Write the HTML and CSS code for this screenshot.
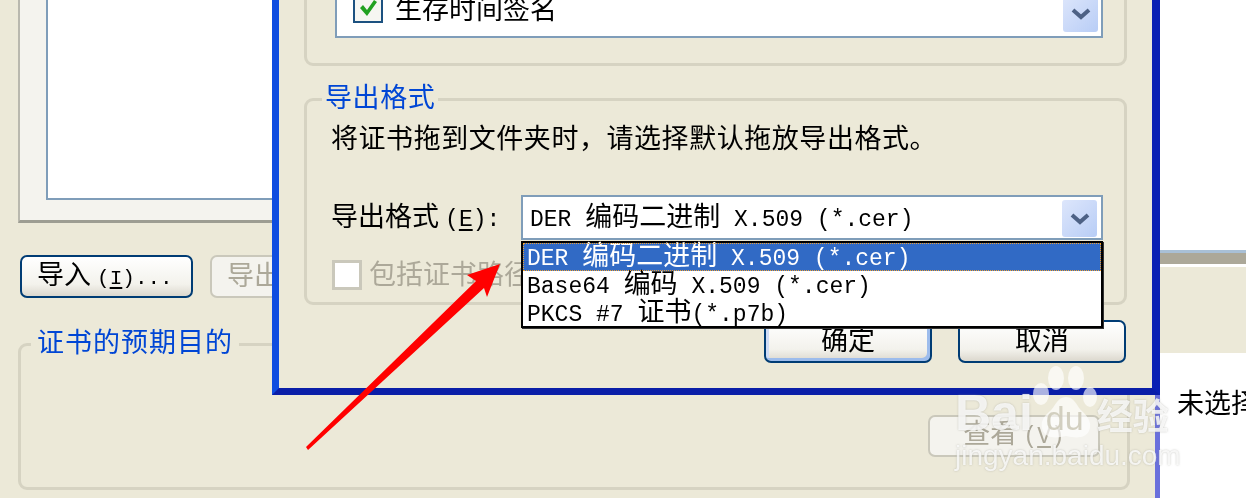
FILE: index.html
```html
<!DOCTYPE html>
<html lang="zh">
<head>
<meta charset="utf-8">
<title>证书导出格式</title>
<link rel="stylesheet" href="styles.css">
</head>
<body>
<div class="stage">
  <section class="back">
    <div class="tab-panel"><div class="cert-list"></div></div>
    <div class="back-buttons">
      <button class="btn btn-import"><span class="btn-label">导入 <span class="l l-small">(<u>I</u>)...</span></span></button>
      <button class="btn btn-export" disabled><span class="btn-label">导出</span></button>
    </div>
    <div class="group group-purpose">
      <div class="legend legend-purpose">证书的预期目的</div>
      <button class="btn btn-view" disabled><span class="btn-label">查看 <span class="l">(<u>V</u>)</span></span></button>
    </div>
  </section>

  <aside class="side">
    <div class="side-bar"></div>
    <div class="side-white"><span class="side-text">未选择</span></div>
  </aside>

  <section class="dialog">
    <div class="group group-top">
      <div class="list">
        <div class="list-row">
          <span class="check">
            <svg width="24" height="24" viewBox="0 0 24 24"><path d="M4 12l3-3 4 5 7-10 3 2-10 14z" fill="#21a121"/></svg>
          </span>
          <span>生存时间签名</span>
        </div>
        <span class="arrow-btn arrow-btn-list">
          <svg width="20" height="14" viewBox="0 0 20 14"><path d="M2 3l8 7 8-7" fill="none" stroke="#4d6185" stroke-width="4"/></svg>
        </span>
      </div>
    </div>
    <div class="group group-format">
      <div class="legend legend-format">导出格式</div>
      <p class="hint">将证书拖到文件夹时，请选择默认拖放导出格式。</p>
      <div class="format-row">
        <label class="format-label">导出格式 <span class="l">(<u>E</u>):</span></label>
        <div class="combo">
          <span class="combo-text"><span class="l">DER </span>编码二进制<span class="l"> X.509 (*.cer)</span></span>
          <span class="arrow-btn">
            <svg width="20" height="14" viewBox="0 0 20 14"><path d="M2 3l8 7 8-7" fill="none" stroke="#4d6185" stroke-width="4"/></svg>
          </span>
        </div>
      </div>
      <div class="path-row">
        <span class="check check-off"></span>
        <span class="path-text">包括证书路径</span>
      </div>
    </div>
    <div class="dialog-buttons">
      <button class="btn btn-ok"><span class="btn-label">确定</span></button>
      <button class="btn btn-cancel"><span class="btn-label">取消</span></button>
    </div>
  </section>

  <ul class="dropdown">
    <li class="opt opt-selected"><span class="l">DER </span>编码二进制<span class="l"> X.509 (*.cer)</span></li>
    <li class="opt"><span class="l">Base64 </span>编码<span class="l"> X.509 (*.cer)</span></li>
    <li class="opt"><span class="l">PKCS #7 </span>证书<span class="l">(*.p7b)</span></li>
  </ul>

  <svg class="red-arrow" width="1246" height="498" viewBox="0 0 1246 498">
    <polygon points="500,264 467,275 476,281 306,447 308,450 484,288 487,297" fill="#ff0000"/>
  </svg>

  <div class="watermark">
    <svg class="paw" width="66" height="84" viewBox="0 0 66 84">
      <ellipse cx="8" cy="29" rx="8" ry="11"/>
      <ellipse cx="23" cy="13" rx="8" ry="12"/>
      <ellipse cx="43" cy="13" rx="8" ry="12"/>
      <ellipse cx="57" cy="32" rx="7" ry="10"/>
      <path d="M33 32c-9 0-10 9-17 15-7 6-9 12-6 19 4 8 14 7 23 5 9 2 19 3 23-5 3-7 0-13-6-19-7-6-8-15-17-15z"/>
    </svg>
    <div class="wm-brand"><span class="wm-bai">Bai</span><span class="wm-du">du</span><span class="wm-cn">经验</span></div>
    <div class="wm-url">jingyan.baidu.com</div>
  </div>
</div>
</body>
</html>
```
FILE: styles.css
```css
* { box-sizing: border-box; }
html, body { margin: 0; padding: 0; }
body {
  width: 1246px;
  height: 498px;
  overflow: hidden;
  font-family: "Noto Sans CJK SC", "Liberation Sans", sans-serif;
  font-size: 27px;
  color: #000;
  background: #ece9d8;
}
.stage {
  position: relative;
  width: 1246px;
  height: 498px;
  overflow: hidden;
  background: #ece9d8;
  filter: blur(0.4px);
}
.l {
  font-family: "Liberation Mono", monospace;
  font-size: 23px;
}
.l-small { font-size: 21px; }
u { text-underline-offset: 3px; }

/* back window */
.back {
  position: absolute;
  left: 18px;
  top: -40px;
  width: 1137px;
  height: 538px;
  display: flex;
  flex-direction: column;
}
.tab-panel {
  width: 1137px;
  height: 263px;
  padding: 0 0 20px 26px;
  background: #f4f3ee;
  border-left: 2px solid #b9b8ae;
  border-bottom: 3px solid #9d9d92;
}
.cert-list {
  height: 100%;
  background: #fff;
  border-left: 2px solid #7f9db9;
  border-bottom: 2px solid #7f9db9;
}
.back-buttons {
  display: flex;
  gap: 17px;
  margin: 32px 0 0 2px;
}
.btn {
  font-family: inherit;
  font-size: 27px;
  line-height: 1;
  color: #000;
  padding: 0;
  border: 2px solid #003c74;
  border-radius: 7px;
  background: linear-gradient(#fff, #f3f2ec 70%, #dcd8ce);
}
.btn-label { display: block; margin-top: -6px; white-space: nowrap; }
.btn:disabled {
  color: #aca899;
  border-color: #cac8bb;
  background: #f4f3ee;
}
.btn-import { width: 173px; height: 43px; text-align: left; padding-left: 15px; }
.btn-export { width: 110px; height: 43px; text-align: left; padding-left: 15px; }
.group {
  position: relative;
  border: 3px solid #d6d3c2;
  border-radius: 9px;
}
.group-purpose {
  width: 1112px;
  height: 147px;
  margin-top: 45px;
}
.btn-view {
  position: absolute;
  left: 907px;
  top: 69px;
  width: 172px;
  height: 42px;
}
.legend {
  position: absolute;
  background: #ece9d8;
  color: #0046d5;
  line-height: 36px;
  white-space: nowrap;
}
.legend-purpose { left: 10px; top: -23px; padding: 0 6px; letter-spacing: 1px; }

/* right pane */
.side {
  position: absolute;
  left: 1155px;
  top: 0;
  width: 91px;
  height: 498px;
  background: #fff;
  border-left: 5px solid #6a70dc;
}
.side-bar {
  margin-top: 250px;
  height: 103px;
  background: #ece9d8;
  border-top: 3px solid #a9c0d6;
  box-shadow: inset 0 11px 0 #aca899, inset 0 14px 0 #fff;
}
.side-white {
  padding: 30px 0 0 17px;
  white-space: nowrap;
  line-height: 38px;
}

/* dialog */
.dialog {
  position: absolute;
  left: 272px;
  top: -40px;
  width: 888px;
  height: 435px;
  padding: 0 25px 0 25px;
  background: #ece9d8;
  border-left: 7px solid #0f4de0;
  border-right: 8px solid #0a20b4;
  border-bottom: 7px solid #0a1ea8;
  display: flex;
  flex-direction: column;
}
.group-top {
  height: 106px;
  padding: 0 21px 25px 28px;
}
.list {
  position: relative;
  height: 100%;
  background: #fff;
  border: 2px solid #7f9db9;
  border-top: 0;
}
.list-row {
  display: flex;
  align-items: center;
  gap: 12px;
  position: absolute;
  left: 16px;
  top: 26px;
  line-height: 38px;
}
.check {
  display: flex;
  align-items: center;
  justify-content: center;
  width: 30px;
  height: 30px;
  background: #f6f6f2;
  border: 2px solid #1c5180;
}
.arrow-btn {
  position: absolute;
  right: 4px;
  top: 3px;
  width: 35px;
  height: 37px;
  display: flex;
  align-items: center;
  justify-content: center;
  background: linear-gradient(135deg, #dde6fb, #b8cdf6);
  border-radius: 3px;
}
.arrow-btn-list { top: 32px; right: 3px; }
.group-format {
  height: 207px;
  margin-top: 32px;
}
.legend-format { left: 15px; top: -23px; padding: 0 3px; letter-spacing: 0.6px; }
.hint {
  margin: 0;
  position: absolute;
  left: 24px;
  top: 17px;
  line-height: 38px;
  letter-spacing: 0.55px;
  white-space: nowrap;
}
.format-row {
  position: absolute;
  left: 24px;
  top: 94px;
  display: flex;
  align-items: center;
  gap: 12px;
}
.format-label {
  width: 178px;
  white-space: nowrap;
  line-height: 34px;
}
.combo {
  position: relative;
  width: 582px;
  height: 45px;
  background: #fff;
  border: 2px solid #7f9db9;
  padding-left: 7px;
  line-height: 36px;
  white-space: nowrap;
}
.path-row {
  position: absolute;
  left: 25px;
  top: 159px;
  display: flex;
  align-items: center;
  gap: 7px;
  color: #aca899;
  white-space: nowrap;
  line-height: 32px;
}
.path-text { margin-top: -4px; }
.check-off { background: #fff; border: 3px solid #cac8bb; }
.dialog-buttons {
  display: flex;
  gap: 26px;
  margin: 15px 0 0 460px;
}
.btn-ok {
  width: 168px;
  height: 43px;
  box-shadow: inset -3px -3px 0 #9dbcec, inset 3px 3px 0 #cfdcf6;
}
.btn-cancel { width: 168px; height: 43px; }

/* dropdown */
.dropdown {
  position: absolute;
  left: 521px;
  top: 241px;
  width: 582px;
  height: 87px;
  margin: 0;
  padding: 0;
  list-style: none;
  background: #fff;
  border: 2px solid #000;
  box-shadow: 1px 1px 0 #333;
}
.opt {
  height: 28px;
  line-height: 22px;
  padding-left: 4px;
  white-space: nowrap;
}
.opt-selected {
  background: #316ac5;
  color: #fff;
  outline: 1px dotted #f0a030;
  outline-offset: -1px;
}

/* annotation and watermark */
.red-arrow { position: absolute; left: 0; top: 0; }
.watermark {
  position: absolute;
  left: 955px;
  top: 365px;
  width: 240px;
  height: 110px;
  color: rgba(255, 255, 255, 0.8);
  text-shadow: 0 0 2px rgba(150, 150, 140, 0.55);
}
.paw {
  position: absolute;
  left: 78px;
  top: 0;
  fill: rgba(255, 255, 255, 0.66);
}
.wm-brand {
  position: absolute;
  left: 0;
  top: 18px;
  font-family: "Liberation Sans", sans-serif;
  font-weight: 700;
  font-size: 50px;
  line-height: 60px;
  white-space: nowrap;
}
.wm-du {
  margin-left: 13px;
  font-weight: 400;
  font-size: 34px;
  color: rgba(205, 202, 185, 0.9);
  text-shadow: none;
}
.wm-cn {
  font-family: "Noto Sans CJK SC", sans-serif;
  font-size: 36px;
  margin-left: 13px;
}
.wm-url {
  position: absolute;
  left: 0;
  top: 76px;
  font-family: "Liberation Sans", sans-serif;
  font-size: 28px;
  line-height: 30px;
  white-space: nowrap;
}
```
